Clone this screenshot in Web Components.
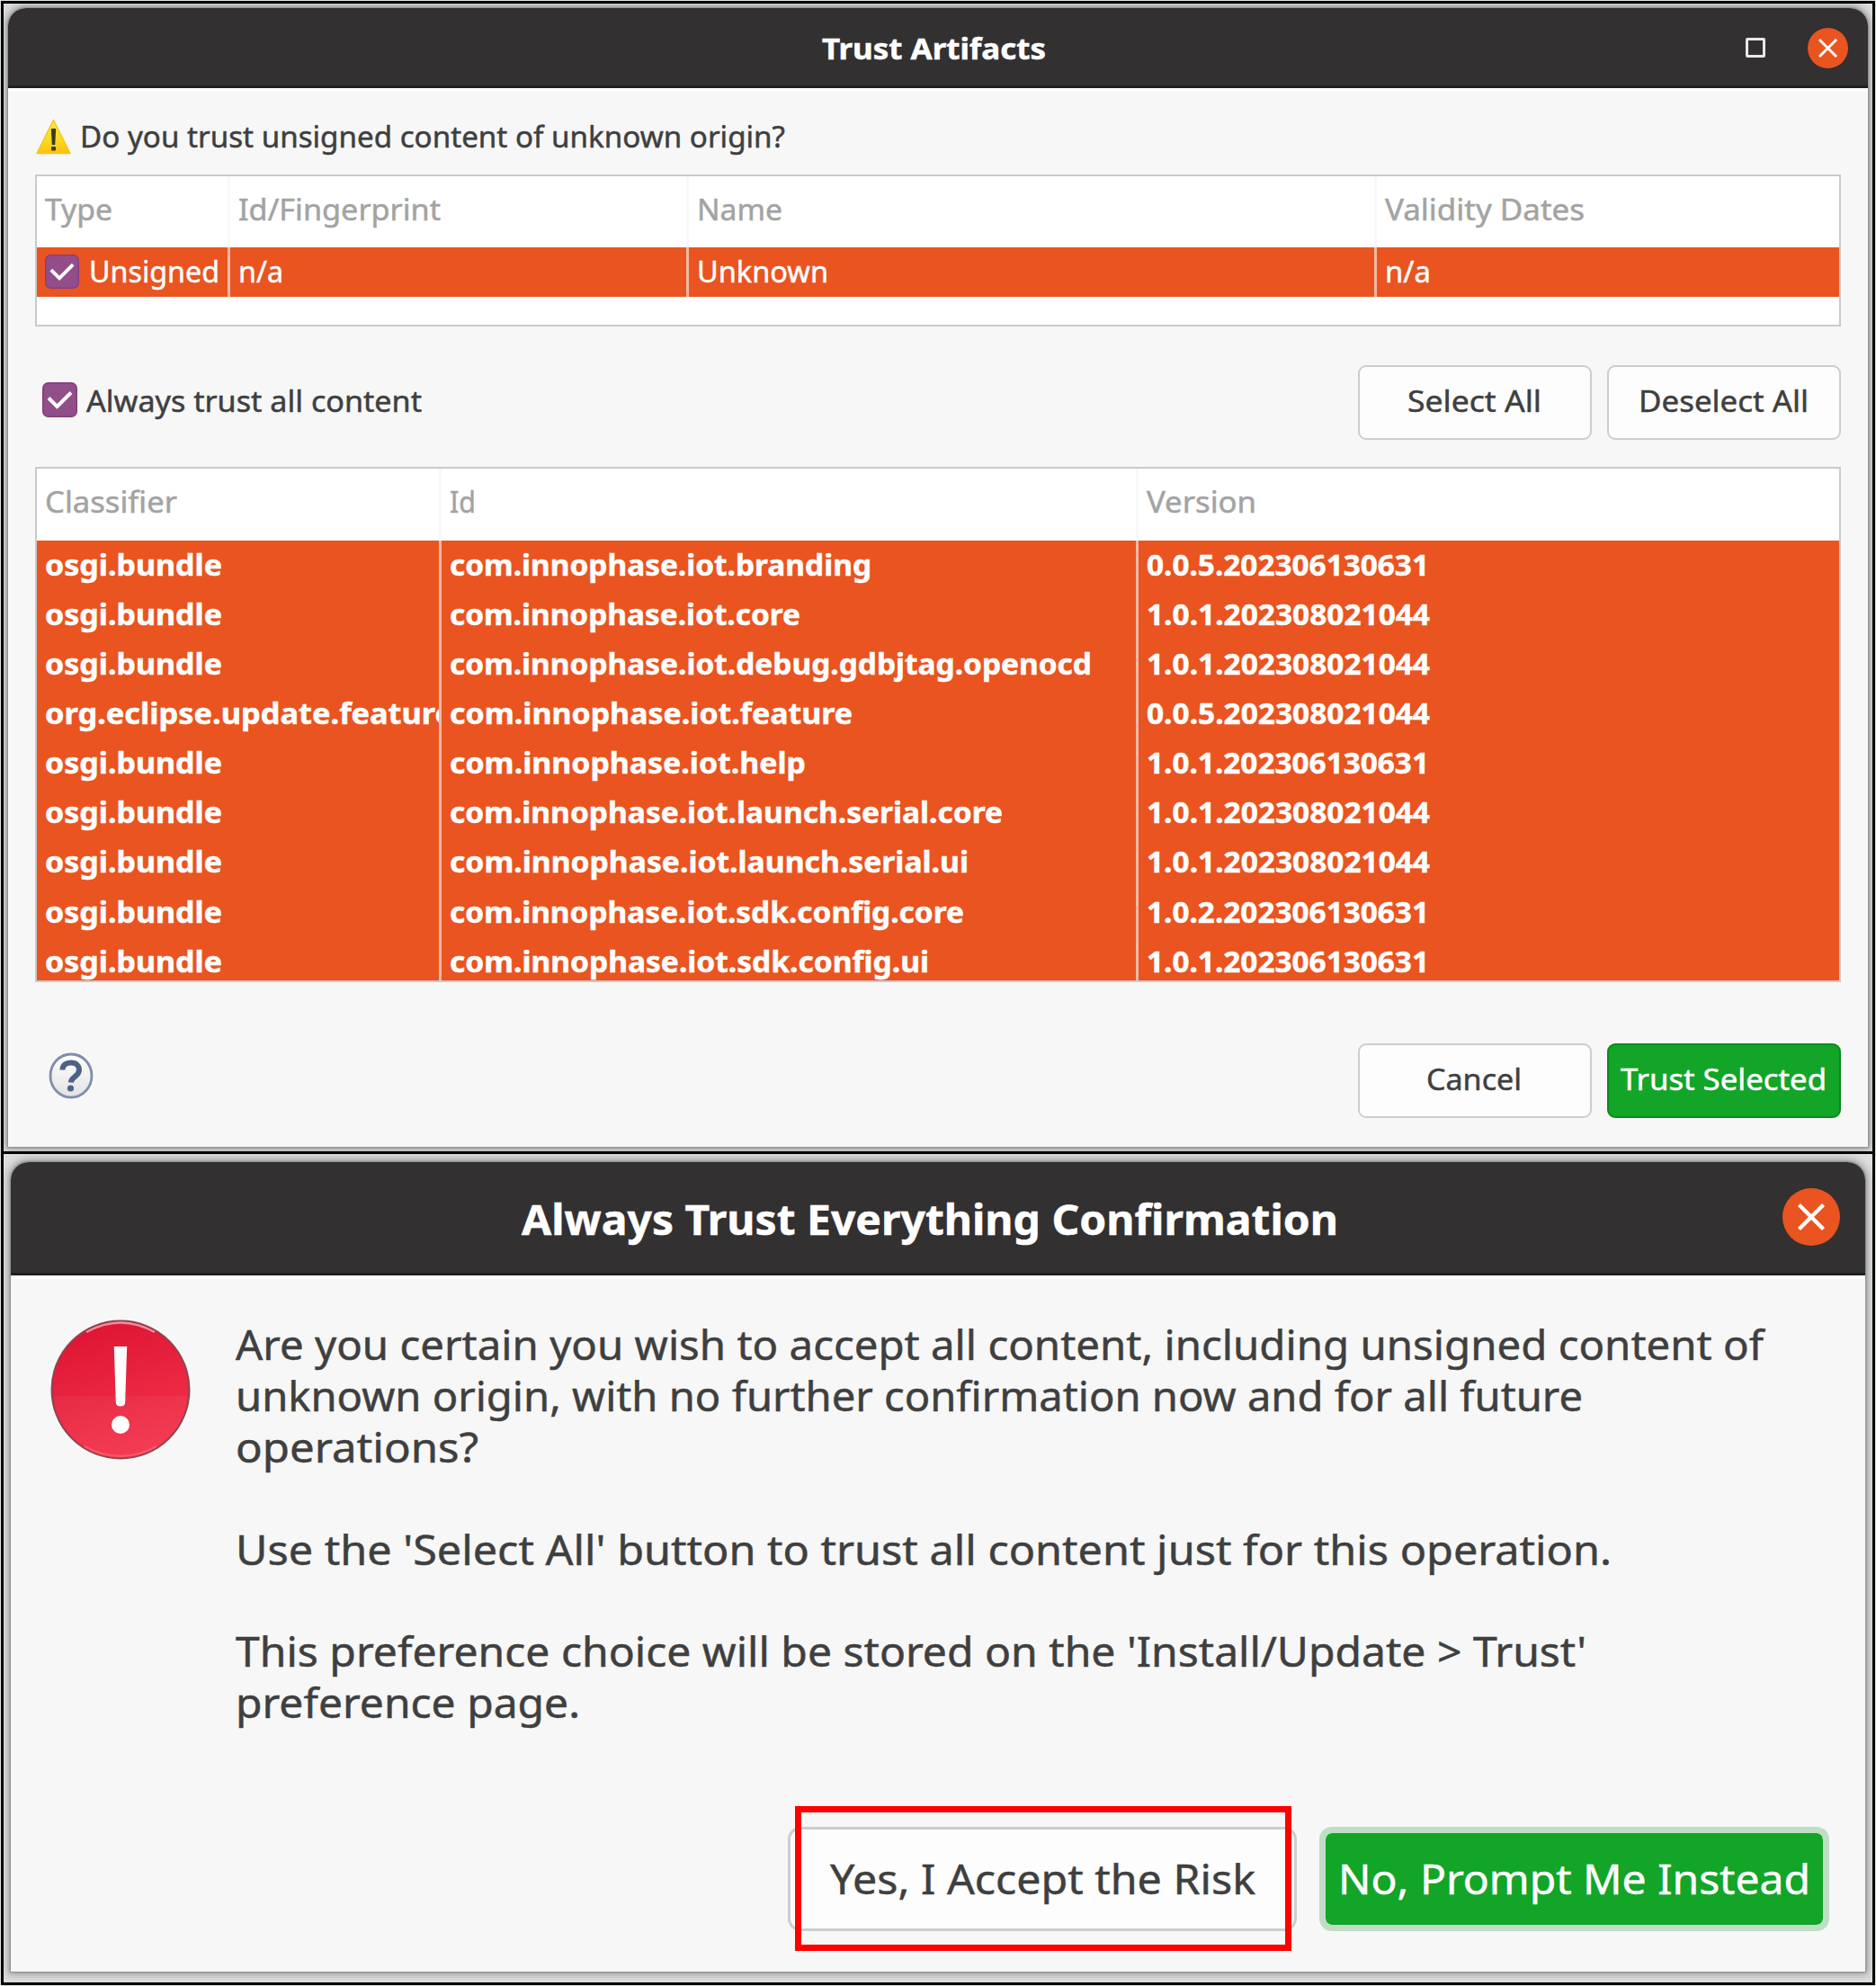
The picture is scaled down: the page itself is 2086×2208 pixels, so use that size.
<!DOCTYPE html>
<html lang="en">
<head>
<meta charset="utf-8">
<title>Trust Artifacts</title>
<style>
html,body{margin:0;padding:0}
body{width:2086px;height:2208px;overflow:hidden;background:#dfe3df;font-family:"Noto Sans","Open Sans",sans-serif;color:#3f3f3f}
</style>
</head>
<body>
<trust-page></trust-page>
<script>
const define = (name, html, setup) => customElements.define(name, class extends HTMLElement {
  connectedCallback() {
    if (this.shadowRoot) return;
    this.attachShadow({mode: 'open'}).innerHTML = html;
    if (setup) setup.call(this, this.shadowRoot);
  }
});

/* One line of text, condensed or widened to the width in its w attribute. */
define('fit-text', `<style>
:host{display:block;white-space:nowrap;flex:none;font-size:33px;line-height:44px;height:1lh;-webkit-text-stroke:.5px currentColor}
span{display:inline-block;transform-origin:0 0}
</style><span><slot></slot></span>`, function (root) {
  const span = root.querySelector('span');
  const target = Number(this.getAttribute('w'));
  this.style.width = target + 'px';
  span.style.transform = `scaleX(${target / span.getBoundingClientRect().width})`;
});

define('close-button', `<style>:host{display:block;flex:none;width:45px;height:45px}svg{display:block;width:100%;height:100%}</style>
<svg viewBox="0 0 45 45"><circle cx="22.5" cy="22.5" r="22.5" fill="#e95420"/><path d="M13 13l19 19M32 13l-19 19" stroke="#fff" stroke-width="3"/></svg>`);

define('check-box', `<style>:host{display:block;flex:none;width:39px;height:39px}svg{display:block;width:100%;height:100%}</style>
<svg viewBox="0 0 39 39"><rect x=".7" y=".7" width="37.600" height="37.600" rx="6" fill="#924d8b" stroke="#813e7b" stroke-width="1.400"/><path d="M7 17.500l9.500 9.500L32 11.500" fill="none" stroke="#fff" stroke-width="4"/></svg>`);

define('warning-icon', `<style>:host{display:block;flex:none;width:39px;height:40px}svg{display:block}</style>
<svg width="39" height="40" viewBox="0 0 39 40"><defs><linearGradient id="g" x1="0" y1="0" x2="0" y2="1"><stop offset="0" stop-color="#fbe94a"/><stop offset=".6" stop-color="#fbd91f"/><stop offset="1" stop-color="#fdc010"/></linearGradient></defs>
<path d="M19.500 1.500L38 38.500H1z" fill="url(#g)" stroke="#f3c71c" stroke-width="1.500" stroke-linejoin="round"/><path d="M16.800 11h5.400l-1 18h-3.400z" fill="#3d3a1d"/><rect x="17" y="31" width="5" height="4.500" rx="1" fill="#3d3a1d"/></svg>`);

define('help-icon', `<style>:host{display:block;flex:none;width:50px;height:52px}svg{display:block}</style>
<svg width="50" height="52" viewBox="0 0 50 52"><defs><linearGradient id="g" x1="0" y1="0" x2="0" y2="1"><stop offset="0" stop-color="#fff"/><stop offset="1" stop-color="#e2e2e4"/></linearGradient></defs>
<ellipse cx="25" cy="26" rx="23" ry="24" fill="url(#g)" stroke="#7f8ea9" stroke-width="2.800"/>
<path d="M15.500 19.500c0-5.500 4-8 9.500-8 6 0 9 3.500 9 8 0 3.500-2 5.500-4.700 7.500-3 2.300-4.300 3-4.500 6.500" fill="none" stroke="#4d6285" stroke-width="6"/><circle cx="24.500" cy="40" r="3.600" fill="#4d6285"/></svg>`);

define('error-icon', `<style>:host{display:block;flex:none;width:156px;height:158px}svg{display:block}</style>
<svg width="156" height="158" viewBox="0 0 156 158"><defs><linearGradient id="g" x1="0" y1="0" x2=".3" y2="1"><stop offset="0" stop-color="#db1230"/><stop offset="1" stop-color="#f3324c"/></linearGradient><clipPath id="c"><circle cx="78" cy="79" r="75"/></clipPath></defs>
<circle cx="78" cy="79" r="76.500" fill="url(#g)" stroke="#8a4650" stroke-width="2"/>
<rect x="0" y="86" width="156" height="72" fill="#fff" opacity=".04" clip-path="url(#c)"/>
<path d="M40 15Q78-6 116 15" fill="none" stroke="#f28d9b" stroke-width="2.500"/>
<path d="M38 142Q78 164 118 142" fill="none" stroke="#ff5568" stroke-width="2.500"/>
<path d="M70.800 31h14.400l-2 62q-.2 4.500-5.200 4.500t-5.200-4.500z" fill="#fff"/><circle cx="78" cy="118" r="10" fill="#fff"/></svg>`);

define('push-button', `<style>
:host{box-sizing:border-box;display:flex;flex:none;justify-content:center;width:260px;height:83px;padding-top:16px;border:2px solid #cdcdcd;border-radius:9px;background:#fdfdfd}
:host([primary]){background:#12a528;border-color:#0b8a1e;color:#fff}
</style><slot></slot>`);

define('app-window', `<style>
:host{display:flex;flex-direction:column;flex:none;box-sizing:border-box;background:#f7f7f7;border-radius:20px 20px 0 0;box-shadow:0 0 2px 1px #8b8b8b,0 0 9px 3px #8b8b8bcc}
header{box-sizing:border-box;display:grid;flex:none;height:var(--bar);background:#333031;border-bottom:3px solid #201e1f;border-radius:20px 20px 0 0;color:#fff;font-weight:700}
header>*{grid-area:1/1}
.title{justify-self:center;padding-top:var(--title-top);padding-right:var(--title-shift)}
.tools{justify-self:end;display:flex;align-items:center;padding-right:var(--tools-right);margin-top:var(--tools-top);height:64px}
main{border-top:4px solid #fff;display:flex;flex-direction:column}
</style><header><div class="title"><slot name="title"></slot></div><div class="tools"><slot name="tools"></slot></div></header><main><slot></slot></main>`);

/* Table: cols gives the column widths, heads and rows are "text:width" lists. */
define('data-table', `<style>
:host{display:flex;flex-direction:column;box-sizing:border-box;flex:none;width:2008px;border:2px solid #cacaca;background:#fff;overflow:hidden}
.row{display:grid;flex:none;height:55.080px;background:#e95420;color:#fff}
.head{height:var(--head,80px);background:#fff;color:#a3a3a3}
.cell{box-sizing:border-box;overflow:hidden;display:flex;border-right:3px solid #f5b9a4;padding:5px 0 0 9px;gap:11px}
.head .cell{border-color:#f8f8f8;padding-top:15px}
.cell:last-child{border-right:0}
.bold{font-weight:700}
check-box{margin-top:3px;width:38px;height:38px}
</style>`, function (root) {
  const cols = this.getAttribute('cols');
  const bold = this.hasAttribute('bold');
  const row = (line, cls) => `<div class="row ${cls}" style="grid-template-columns:${cols}">` +
    line.split('|').map(c => {
      const [text, w] = c.trim().split(':');
      const box = text[0] === '+';
      return `<div class="cell">${box ? '<check-box></check-box>' : ''}<fit-text w="${w}">${box ? text.slice(1) : text}</fit-text></div>`;
    }).join('') + '</div>';
  const holder = document.createElement('div');
  holder.innerHTML = row(this.getAttribute('heads'), 'head') +
    this.getAttribute('rows').split(';').map(r => row(r, bold ? 'bold' : '')).join('');
  root.append(...holder.children);
});

define('trust-page', `<style>
:host{display:flex;flex-direction:column;box-sizing:border-box;width:2086px;height:2208px;padding:1px}
.pane{box-sizing:border-box;flex:none;width:2084px;border:3px solid #000;background:#dedede;overflow:hidden;display:flex;flex-direction:column}
.one{height:1282px;padding:5px 0 0 5px}
.two{height:927px;margin-top:-3px;padding:9px 0 0 8px}
.w1{--bar:89px;--title-top:12px;--title-shift:10px;--tools-right:22px;--tools-top:12px;width:2068px;height:1266px}
.w2{--bar:126px;--title-top:31px;--title-shift:19px;--tools-right:28px;--tools-top:29px;width:2062px;height:900px;font-size:46px}
.max{box-sizing:border-box;width:22px;height:22px;border:3.500px solid #e8e8e8;border-radius:2px;margin-right:47px}
.question{display:flex;padding:30px 0 0 31px;gap:10px}
.question fit-text{margin-top:-2px}
.tables{padding:0 0 0 30px}
.tables.a{margin-top:20px;--head:79px}
.mid{display:flex;align-items:flex-start;padding:43px 30px 30px 38px}
.mid check-box{margin-top:19px}
.mid fit-text.l{margin:18px 0 0 10px}
.push{flex:1}
.mid push-button+push-button,.foot push-button+push-button{margin-left:17px}
.mid push-button,.foot push-button{padding-right:2px}
.foot{display:flex;align-items:flex-start;padding:68px 30px 0 45px}
help-icon{margin-top:10px}
.msg{display:flex;padding:44px 0 0 44px;gap:50px;height:565px}
.lines fit-text,.big fit-text{font-size:46px;line-height:56.900px}
.big{display:flex;justify-content:flex-end;padding-right:40px}
.big push-button{height:116px;padding-top:26px;border-width:3px;border-radius:14px}
.yes{position:relative;margin-right:25px}
.yes push-button{width:566px}
.mark{position:absolute;left:8px;top:-23px;box-sizing:border-box;width:552px;height:161px;border:7px solid #f00}
.big .no{width:567px;border:7px solid #bfdec4;background-clip:padding-box;padding-top:22px}
.w2 .t{font-size:46px;line-height:64px}
</style>
<div class="pane one"><app-window class="w1">
  <fit-text slot="title" w="249" style="font-size:33px;line-height:66px">Trust Artifacts</fit-text>
  <div slot="tools" class="max"></div><close-button slot="tools"></close-button>
  <div class="question"><warning-icon></warning-icon><fit-text w="784">Do you trust unsigned content of unknown origin?</fit-text></div>
  <div class="tables a"><data-table style="height:169px" cols="215px 510px 765px 1fr" heads="Type:75|Id/Fingerprint:225|Name:95|Validity Dates:222" rows="+Unsigned:145|n/a:50|Unknown:146|n/a:51"></data-table></div>
  <div class="mid"><check-box></check-box><fit-text class="l" w="373">Always trust all content</fit-text><div class="push"></div>
    <push-button><fit-text w="149">Select All</fit-text></push-button><push-button><fit-text w="189">Deselect All</fit-text></push-button></div>
  <div class="tables"><data-table bold style="height:573px" cols="449.500px 775px 1fr" heads="Classifier:147|Id:29|Version:122"
    rows="osgi.bundle:197|com.innophase.iot.branding:469|0.0.5.202306130631:314;osgi.bundle:197|com.innophase.iot.core:390|1.0.1.202308021044:315;osgi.bundle:197|com.innophase.iot.debug.gdbjtag.openocd:714|1.0.1.202308021044:315;org.eclipse.update.feature:454|com.innophase.iot.feature:448|0.0.5.202308021044:315;osgi.bundle:197|com.innophase.iot.help:396|1.0.1.202306130631:314;osgi.bundle:197|com.innophase.iot.launch.serial.core:615|1.0.1.202308021044:315;osgi.bundle:197|com.innophase.iot.launch.serial.ui:577|1.0.1.202308021044:315;osgi.bundle:197|com.innophase.iot.sdk.config.core:572|1.0.2.202306130631:314;osgi.bundle:197|com.innophase.iot.sdk.config.ui:533|1.0.1.202306130631:314"></data-table></div>
  <div class="foot"><help-icon></help-icon><div class="push"></div><push-button><fit-text w="106">Cancel</fit-text></push-button><push-button primary><fit-text w="229">Trust Selected</fit-text></push-button></div>
</app-window></div>
<div class="pane two"><app-window class="w2">
  <fit-text slot="title" class="t" w="908">Always Trust Everything Confirmation</fit-text>
  <close-button slot="tools" style="width:64px;height:64px"></close-button>
  <div class="msg"><error-icon></error-icon><div class="lines">
    <fit-text w="1699">Are you certain you wish to accept all content, including unsigned content of</fit-text>
    <fit-text w="1498">unknown origin, with no further confirmation now and for all future</fit-text>
    <fit-text w="270">operations?</fit-text>
    <fit-text w="1" style="visibility:hidden">&nbsp;</fit-text>
    <fit-text w="1530">Use the 'Select All' button to trust all content just for this operation.</fit-text>
    <fit-text w="1" style="visibility:hidden">&nbsp;</fit-text>
    <fit-text w="1502">This preference choice will be stored on the 'Install/Update &gt; Trust'</fit-text>
    <fit-text w="383">preference page.</fit-text></div></div>
  <div class="big"><div class="yes"><push-button><fit-text w="473">Yes, I Accept the Risk</fit-text></push-button><div class="mark"></div></div>
    <push-button primary class="no"><fit-text w="525">No, Prompt Me Instead</fit-text></push-button></div>
</app-window></div>`);
</script>
</body>
</html>
